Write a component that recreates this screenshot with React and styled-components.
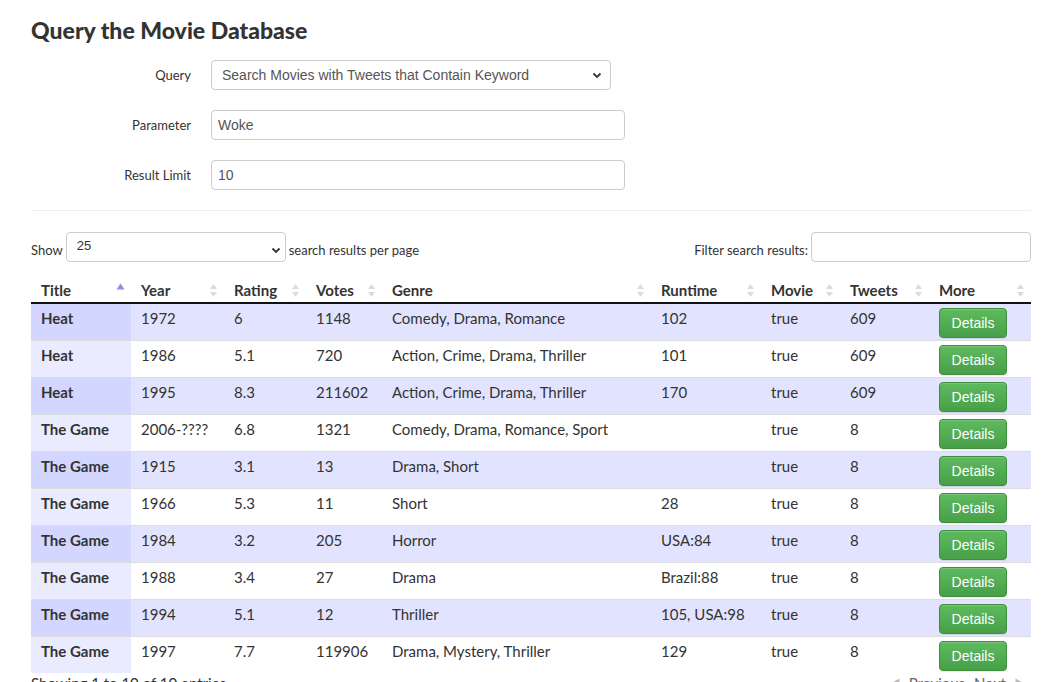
import React from "react";
import styled, { createGlobalStyle } from "styled-components";

const GlobalStyle = createGlobalStyle`
  html, body {
    margin: 0;
    padding: 0;
    background: #fff;
  }
  body {
    font-family: Lato, "Noto Sans", sans-serif;
    color: #333;
  }
  * {
    box-sizing: border-box;
  }
`;

const Page = styled.div`
  width: 1000px;
  margin-left: 31px;
  height: 682px;
  overflow: hidden;
`;

const Heading = styled.h2`
  margin: 15px 0 0 0;
  font-size: 23px;
  font-weight: 900;
  line-height: 30px;
  color: #333;
`;

const Form = styled.form`
  display: flex;
  flex-direction: column;
  gap: 20px;
  margin-top: 15px;
`;

const FormRow = styled.div`
  display: grid;
  grid-template-columns: 160px auto;
  column-gap: 20px;
  align-items: center;
  height: 30px;
`;

const Label = styled.label`
  text-align: right;
  font-size: 13px;
  color: #333;
`;

const Select = styled.div`
  width: ${(p) => p.width}px;
  height: 30px;
  border: 1px solid #ccc;
  border-radius: 4px;
  display: flex;
  align-items: center;
  justify-content: space-between;
  padding: 0 8px 0 10px;
  font-family: "Liberation Sans", Arial, sans-serif;
  font-size: 14px;
  color: #555;
  background: #fff;
`;

const Input = styled.div`
  width: 414px;
  height: 30px;
  border: 1px solid #ccc;
  border-radius: 4px;
  display: flex;
  align-items: center;
  padding: 0 6px;
  font-family: "Liberation Sans", Arial, sans-serif;
  font-size: 14px;
  color: #555;
`;

const Divider = styled.hr`
  border: 0;
  border-top: 1px solid #eee;
  margin: 20px 0 21px 0;
`;

const Controls = styled.div`
  display: flex;
  justify-content: space-between;
  align-items: center;
  font-size: 13px;
  height: 30px;
`;

const ControlGroup = styled.div`
  display: flex;
  align-items: center;
  gap: 3px;
`;

const ControlText = styled.span`
  padding-top: 6px;
`;

const SmallSelect = styled(Select)`
  align-items: flex-start;
  padding-top: 5px;
  padding-right: 4px;
  font-size: 13px;
  color: #333;
`;

const CaretWrap = styled.span`
  margin-top: 4px;
`;

const FilterBox = styled.div`
  width: 220px;
  height: 30px;
  border: 1px solid #ccc;
  border-radius: 4px;
`;

const Table = styled.table`
  width: 1000px;
  margin-top: 15px;
  border-collapse: collapse;
  font-size: 15px;
  table-layout: fixed;
`;

const Th = styled.th`
  position: relative;
  text-align: left;
  font-weight: 700;
  padding: 4px 10px 3px 10px;
  border-bottom: 2px solid #111;
  height: 26px;
  color: #333;
`;

const SortIcon = styled.span`
  position: absolute;
  right: 6px;
  top: 6px;
  display: flex;
  flex-direction: column;
  gap: 1px;
`;

const Tr = styled.tr`
  background: ${(p) => (p.$odd ? "#e2e4ff" : "#fff")};
`;

const Td = styled.td`
  padding: 4px 10px 0 10px;
  height: 37px;
  line-height: 20px;
  vertical-align: top;
  border-top: 1px solid #ddd;
  font-weight: ${(p) => (p.$title ? 700 : 400)};
  background: ${(p) =>
    p.$title ? (p.$odd ? "#d3d6ff" : "#eaebff") : "transparent"};
`;

const DetailsButton = styled.button`
  display: block;
  width: 68px;
  height: 30px;
  margin: 0;
  border: 1px solid #3e8f3e;
  border-radius: 4px;
  background: linear-gradient(#5fba5f, #47a047);
  color: #fff;
  font-family: "Liberation Sans", Arial, sans-serif;
  font-size: 14px;
  box-shadow: inset 0 1px 0 rgba(255, 255, 255, 0.15),
    0 1px 1px rgba(0, 0, 0, 0.075);
`;

const Footer = styled.div`
  display: flex;
  justify-content: space-between;
  align-items: center;
  font-size: 15px;
  padding-top: 1px;
`;

const Pager = styled.div`
  display: flex;
  align-items: center;
  gap: 9px;
  color: #666;
  padding-right: 7px;
`;

const Flip = styled.span`
  display: flex;
  transform: scaleX(-1);
`;

const Chevron = () => (
  <svg width="9" height="10" viewBox="0 0 9 10">
    <path d="M0.5 5 L8.5 0.5 L8.5 9.5 Z" fill="#bbb" />
  </svg>
);

const UpDown = ({ active }) => (
  <SortIcon>
    {active ? (
      <svg width="9" height="7" viewBox="0 0 9 7">
        <path d="M0.5 6.5 L4.5 0.5 L8.5 6.5 Z" fill="#8a8ee6" />
      </svg>
    ) : (
      <svg width="9" height="15" viewBox="0 0 9 15">
        <path d="M1 6 L4.5 1 L8 6 Z" fill="#dcdcdc" />
        <path d="M1 9 L4.5 14 L8 9 Z" fill="#dcdcdc" />
      </svg>
    )}
  </SortIcon>
);

const Caret = () => (
  <svg width="10" height="7" viewBox="0 0 10 7">
    <path d="M1.5 1.5 L5 5 L8.5 1.5" fill="none" stroke="#333" strokeWidth="1.8" />
  </svg>
);

const columns = [
  { name: "Title", width: 100, active: true },
  { name: "Year", width: 93 },
  { name: "Rating", width: 82 },
  { name: "Votes", width: 76 },
  { name: "Genre", width: 269 },
  { name: "Runtime", width: 110 },
  { name: "Movie", width: 79 },
  { name: "Tweets", width: 89 },
  { name: "More", width: 102 },
];

const movies = [
  ["Heat", "1972", "6", "1148", "Comedy, Drama, Romance", "102", "true", "609"],
  ["Heat", "1986", "5.1", "720", "Action, Crime, Drama, Thriller", "101", "true", "609"],
  ["Heat", "1995", "8.3", "211602", "Action, Crime, Drama, Thriller", "170", "true", "609"],
  ["The Game", "2006-????", "6.8", "1321", "Comedy, Drama, Romance, Sport", "", "true", "8"],
  ["The Game", "1915", "3.1", "13", "Drama, Short", "", "true", "8"],
  ["The Game", "1966", "5.3", "11", "Short", "28", "true", "8"],
  ["The Game", "1984", "3.2", "205", "Horror", "USA:84", "true", "8"],
  ["The Game", "1988", "3.4", "27", "Drama", "Brazil:88", "true", "8"],
  ["The Game", "1994", "5.1", "12", "Thriller", "105, USA:98", "true", "8"],
  ["The Game", "1997", "7.7", "119906", "Drama, Mystery, Thriller", "129", "true", "8"],
];

export default function App() {
  return (
    <Page>
      <GlobalStyle />
      <Heading>Query the Movie Database</Heading>
      <Form>
        <FormRow>
          <Label>Query</Label>
          <Select width={400}>
            Search Movies with Tweets that Contain Keyword
            <Caret />
          </Select>
        </FormRow>
        <FormRow>
          <Label>Parameter</Label>
          <Input>Woke</Input>
        </FormRow>
        <FormRow>
          <Label>Result Limit</Label>
          <Input>10</Input>
        </FormRow>
      </Form>
      <Divider />
      <Controls>
        <ControlGroup>
          <ControlText>Show</ControlText>
          <SmallSelect width={220}>
            25
            <CaretWrap>
              <Caret />
            </CaretWrap>
          </SmallSelect>
          <ControlText>search results per page</ControlText>
        </ControlGroup>
        <ControlGroup>
          <ControlText>Filter search results:</ControlText>
          <FilterBox />
        </ControlGroup>
      </Controls>
      <Table>
        <colgroup>
          {columns.map((c) => (
            <col key={c.name} style={{ width: c.width }} />
          ))}
        </colgroup>
        <thead>
          <tr>
            {columns.map((c) => (
              <Th key={c.name}>
                {c.name}
                <UpDown active={c.active} />
              </Th>
            ))}
          </tr>
        </thead>
        <tbody>
          {movies.map((m, i) => {
            const odd = i % 2 === 0;
            return (
              <Tr key={i} $odd={odd}>
                {m.map((v, j) => (
                  <Td key={j} $title={j === 0} $odd={odd}>
                    {v}
                  </Td>
                ))}
                <Td>
                  <DetailsButton>Details</DetailsButton>
                </Td>
              </Tr>
            );
          })}
        </tbody>
      </Table>
      <Footer>
        <span>Showing 1 to 10 of 10 entries</span>
        <Pager>
          <Chevron />
          <span>Previous</span>
          <span>Next</span>
          <Flip>
            <Chevron />
          </Flip>
        </Pager>
      </Footer>
    </Page>
  );
}
